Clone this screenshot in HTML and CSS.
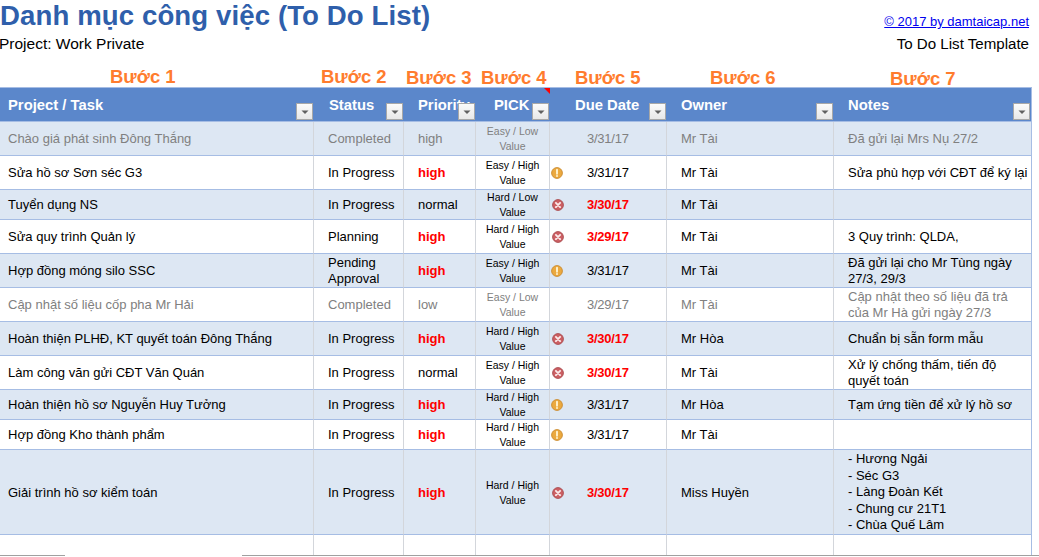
FILE: index.html
```html
<!DOCTYPE html>
<html lang="vi">
<head>
<meta charset="utf-8">
<title>Danh mục công việc</title>
<link rel="stylesheet" href="styles.css">
</head>
<body>
<svg class="defs" width="0" height="0" aria-hidden="true">
  <symbol id="warn" viewBox="0 0 12 12">
    <circle cx="6" cy="6" r="5.4" fill="#eba93f" stroke="#c98a2e" stroke-width="0.9"/>
    <path d="M6 2.6V6.8" stroke="#fff3d0" stroke-width="1.9" stroke-linecap="round"/>
    <circle cx="6" cy="9" r="1" fill="#fff3d0"/>
  </symbol>
  <symbol id="err" viewBox="0 0 12 12">
    <circle cx="6" cy="6" r="5.4" fill="#cc6064" stroke="#a8494d" stroke-width="0.9"/>
    <path d="M3.9 3.9L8.1 8.1M8.1 3.9L3.9 8.1" stroke="#fbeaea" stroke-width="1.9" stroke-linecap="round"/>
  </symbol>
  <symbol id="arrow" viewBox="0 0 16 16">
    <path d="M4.5 6.5H11.5L8 10Z" fill="#606060"/>
  </symbol>
</svg>
<header class="top">
  <div class="top-row">
    <h1 class="title">Danh mục công việc (To Do List)</h1>
    <a class="credit" href="#">© 2017 by damtaicap.net</a>
  </div>
  <div class="sub-row">
    <span class="project">Project: Work Private</span>
    <span class="template">To Do List Template</span>
  </div>
</header>
<div class="steps">
  <span class="step">Bước 1</span>
  <span class="step">Bước 2</span>
  <span class="step low">Bước 3</span>
  <span class="step low">Bước 4</span>
  <span class="step low">Bước 5</span>
  <span class="step low">Bước 6</span>
  <span class="step lower">Bước 7</span>
</div>
<table class="todo">
  <colgroup>
    <col class="c1"><col class="c2"><col class="c3"><col class="c4"><col class="c5"><col class="c6"><col class="c7">
  </colgroup>
  <thead>
    <tr>
      <th class="pad-task">Project / Task<span class="filter"><svg width="16" height="16"><use href="#arrow"/></svg></span></th>
      <th class="pad-status">Status<span class="filter"><svg width="16" height="16"><use href="#arrow"/></svg></span></th>
      <th class="pad">Priority<span class="filter"><svg width="16" height="16"><use href="#arrow"/></svg></span></th>
      <th class="pick-head">PICK<span class="comment"></span><span class="filter"><svg width="16" height="16"><use href="#arrow"/></svg></span></th>
      <th class="pad-due">Due Date<span class="filter"><svg width="16" height="16"><use href="#arrow"/></svg></span></th>
      <th class="pad">Owner<span class="filter"><svg width="16" height="16"><use href="#arrow"/></svg></span></th>
      <th class="pad">Notes<span class="filter"><svg width="16" height="16"><use href="#arrow"/></svg></span></th>
    </tr>
  </thead>
  <tbody>
    <tr class="alt done r34">
      <td class="pad-task">Chào giá phát sinh Đông Thắng</td><td class="pad">Completed</td><td class="pad">high</td>
      <td class="pick">Easy / Low<br>Value</td><td><div class="due"><span class="flag"></span><span>3/31/17</span></div></td>
      <td class="pad">Mr Tài</td><td class="pad">Đã gửi lại Mrs Nụ 27/2</td>
    </tr>
    <tr class="r34">
      <td class="pad-task">Sửa hồ sơ Sơn séc G3</td><td class="pad">In Progress</td><td class="pad hot">high</td>
      <td class="pick">Easy / High<br>Value</td><td><div class="due"><span class="flag"><svg width="12" height="12"><use href="#warn"/></svg></span><span>3/31/17</span></div></td>
      <td class="pad">Mr Tài</td><td class="pad">Sửa phù hợp với CĐT để ký lại</td>
    </tr>
    <tr class="alt r30">
      <td class="pad-task">Tuyển dụng NS</td><td class="pad">In Progress</td><td class="pad">normal</td>
      <td class="pick">Hard / Low<br>Value</td><td><div class="due"><span class="flag flag-err"><svg width="12" height="12"><use href="#err"/></svg></span><span class="hot">3/30/17</span></div></td>
      <td class="pad">Mr Tài</td><td class="pad"></td>
    </tr>
    <tr class="r34">
      <td class="pad-task">Sửa quy trình Quản lý</td><td class="pad">Planning</td><td class="pad hot">high</td>
      <td class="pick">Hard / High<br>Value</td><td><div class="due"><span class="flag flag-err"><svg width="12" height="12"><use href="#err"/></svg></span><span class="hot">3/29/17</span></div></td>
      <td class="pad">Mr Tài</td><td class="pad">3 Quy trình: QLDA,</td>
    </tr>
    <tr class="alt r34">
      <td class="pad-task">Hợp đồng móng silo SSC</td><td class="pad">Pending<br>Approval</td><td class="pad hot">high</td>
      <td class="pick">Easy / High<br>Value</td><td><div class="due"><span class="flag"><svg width="12" height="12"><use href="#warn"/></svg></span><span>3/31/17</span></div></td>
      <td class="pad">Mr Tài</td><td class="pad">Đã gửi lại cho Mr Tùng ngày<br>27/3, 29/3</td>
    </tr>
    <tr class="done r34">
      <td class="pad-task">Cập nhật số liệu cốp pha Mr Hải</td><td class="pad">Completed</td><td class="pad">low</td>
      <td class="pick">Easy / Low<br>Value</td><td><div class="due"><span class="flag"></span><span>3/29/17</span></div></td>
      <td class="pad">Mr Tài</td><td class="pad">Cập nhật theo số liệu đã trả<br>của Mr Hà gửi ngày 27/3</td>
    </tr>
    <tr class="alt r34">
      <td class="pad-task">Hoàn thiện PLHĐ, KT quyết toán Đông Thắng</td><td class="pad">In Progress</td><td class="pad hot">high</td>
      <td class="pick">Hard / High<br>Value</td><td><div class="due"><span class="flag flag-err"><svg width="12" height="12"><use href="#err"/></svg></span><span class="hot">3/30/17</span></div></td>
      <td class="pad">Mr Hòa</td><td class="pad">Chuẩn bị sẵn form mẫu</td>
    </tr>
    <tr class="r34">
      <td class="pad-task">Làm công văn gửi CĐT Văn Quán</td><td class="pad">In Progress</td><td class="pad">normal</td>
      <td class="pick">Easy / High<br>Value</td><td><div class="due"><span class="flag flag-err"><svg width="12" height="12"><use href="#err"/></svg></span><span class="hot">3/30/17</span></div></td>
      <td class="pad">Mr Tài</td><td class="pad">Xử lý chống thấm, tiến độ<br>quyết toán</td>
    </tr>
    <tr class="alt r30">
      <td class="pad-task">Hoàn thiện hồ sơ Nguyễn Huy Tưởng</td><td class="pad">In Progress</td><td class="pad hot">high</td>
      <td class="pick">Hard / High<br>Value</td><td><div class="due"><span class="flag"><svg width="12" height="12"><use href="#warn"/></svg></span><span>3/31/17</span></div></td>
      <td class="pad">Mr Hòa</td><td class="pad">Tạm ứng tiền để xử lý hồ sơ</td>
    </tr>
    <tr class="r30">
      <td class="pad-task">Hợp đồng Kho thành phẩm</td><td class="pad">In Progress</td><td class="pad hot">high</td>
      <td class="pick">Hard / High<br>Value</td><td><div class="due"><span class="flag"><svg width="12" height="12"><use href="#warn"/></svg></span><span>3/31/17</span></div></td>
      <td class="pad">Mr Tài</td><td class="pad"></td>
    </tr>
    <tr class="alt r85">
      <td class="pad-task">Giải trình hồ sơ kiểm toán</td><td class="pad">In Progress</td><td class="pad hot">high</td>
      <td class="pick">Hard / High<br>Value</td><td><div class="due"><span class="flag flag-err"><svg width="12" height="12"><use href="#err"/></svg></span><span class="hot">3/30/17</span></div></td>
      <td class="pad">Miss Huyền</td><td class="pad list">- Hương Ngải<br>- Séc G3<br>- Làng Đoàn Kết<br>- Chung cư 21T1<br>- Chùa Quế Lâm</td>
    </tr>
    <tr class="r20 blank">
      <td></td><td></td><td></td><td></td><td></td><td></td><td></td>
    </tr>
  </tbody>
</table>
<div class="tabs">
  <span class="tab-a"></span>
  <span class="tab-b"></span>
</div>
</body>
</html>
```

FILE: styles.css
```css
* { box-sizing: border-box; }

html, body {
  margin: 0;
  height: 557px;
  overflow: hidden;
  background: #fff;
  color: #000;
  font-family: "Liberation Sans", Arial, sans-serif;
}

.defs { position: absolute; }

.top { height: 67px; padding-right: 10px; }

.top-row {
  display: flex;
  justify-content: space-between;
  height: 33px;
}

.title {
  margin: 0;
  font-size: 27.6px;
  line-height: 32px;
  font-weight: 700;
  color: #2f5fab;
  letter-spacing: 0.1px;
}

.credit {
  margin-top: 14px;
  font-size: 13px;
  line-height: 15px;
  color: #0000ee;
  text-decoration: underline;
}

.sub-row {
  display: flex;
  justify-content: space-between;
  line-height: 22px;
}

.project { margin-left: -1px; font-size: 15.5px; }
.template { font-size: 15.1px; }

.steps {
  display: grid;
  grid-template-columns: 211px 85px 75px 94px 135px 180px auto;
  justify-content: start;
  height: 20px;
  padding-left: 110px;
  font-size: 18.5px;
  line-height: 20px;
  font-weight: 700;
  color: #ff7c2e;
}

.step { white-space: nowrap; }
.low { padding-top: 1px; }
.lower { padding-top: 2px; }

.todo {
  width: 1032px;
  table-layout: fixed;
  border-collapse: separate;
  border-spacing: 0;
  font-size: 13px;
  border-right: 1px solid #a6bde4;
}

.c1 { width: 314px; }
.c2 { width: 90px; }
.c3 { width: 72px; }
.c4 { width: 74px; }
.c5 { width: 117px; }
.c6 { width: 167px; }
.c7 { width: 197px; }

th {
  position: relative;
  height: 35px;
  padding: 0;
  background: #5b87cb;
  color: #fff;
  font-size: 14.8px;
  font-weight: 700;
  text-align: left;
  white-space: nowrap;
  overflow: hidden;
  border-top: 1px solid #a6bde4;
  border-bottom: 1px solid #a6bde4;
}

td {
  padding: 0;
  vertical-align: middle;
  line-height: 16px;
  white-space: nowrap;
  overflow: hidden;
  border-right: 1px solid #d3d6db;
  border-bottom: 1px solid #a6bde4;
}

td:last-child { border-right: 0; }

.r34 td { height: 34px; }
.r30 td { height: 30px; }
.r85 td { height: 85px; padding-top: 1px; }
.r20 td { height: 20px; border-bottom: 0; }

.alt td { background: #dde7f3; }
.done td { color: #808080; }

.pad { padding-left: 14px; }
.pad-status { padding-left: 15px; }
.pad-task { padding-left: 8px; }
.pad-due { padding-left: 25px; }
.pick-head { padding-left: 18px; }

.list { line-height: 16.6px; }

.pick {
  font-size: 10.5px;
  line-height: 15px;
  text-align: center;
}

.r30 .pick { line-height: 14.5px; }

.hot { font-weight: 700; color: #f00; }

.due {
  display: grid;
  grid-template-columns: 37px auto;
  align-items: center;
  letter-spacing: -0.25px;
}

.flag { display: flex; padding-left: 1px; }
.flag-err { padding-left: 2px; }

.filter {
  position: absolute;
  right: 1px;
  bottom: 1px;
  width: 17px;
  height: 17px;
  border: 1px solid #a8a8a8;
  background: linear-gradient(#fbfbfb, #e8e8e8);
}

.filter svg { display: block; }

.comment {
  position: absolute;
  top: 0;
  right: 0;
  border-top: 6px solid #f00;
  border-left: 6px solid transparent;
}

.tabs {
  display: flex;
  justify-content: space-between;
  height: 2px;
}

.tab-a { width: 65px; border-top: 1px solid #a0a0a0; }
.tab-b { width: 797px; border-top: 1px solid #a0a0a0; }
```
